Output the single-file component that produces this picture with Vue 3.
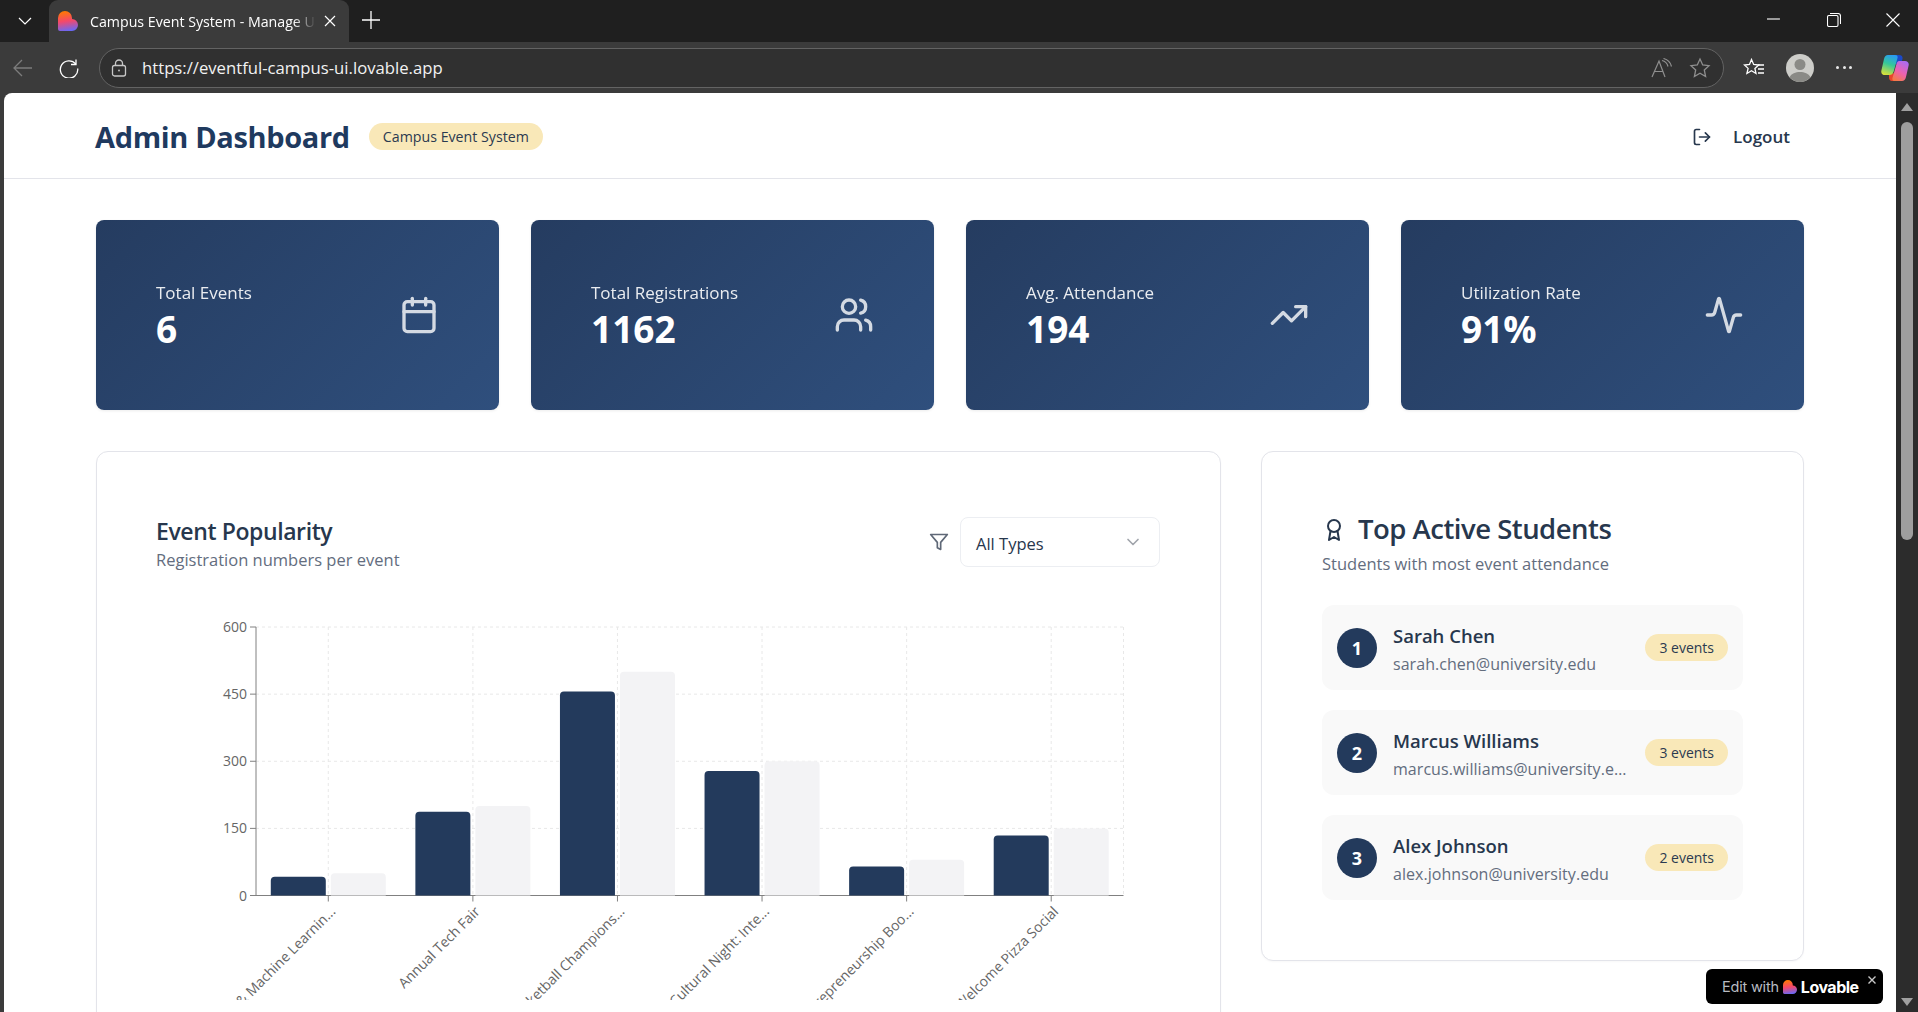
<template>
  <div class="screen">
    <!-- browser tab strip -->
    <div class="tabstrip">
      <div class="tab-menu">
        <svg width="16" height="16" viewBox="0 0 16 16" fill="none" stroke="#fff" stroke-width="1.2"><path d="M2 5l6 6 6-6" /></svg>
      </div>
      <div class="tab">
        <svg class="favicon" width="20" height="20" viewBox="0 0 20 20">
          <defs>
            <linearGradient id="heartA" x1="0.35" y1="0" x2="0.5" y2="1">
              <stop offset="0" stop-color="#ff7a00" />
              <stop offset="0.5" stop-color="#f5486a" />
              <stop offset="1" stop-color="#6a68f5" />
            </linearGradient>
          </defs>
          <path d="M7 0a7 7 0 0 1 7 7v1a6 6 0 0 1 0 12H2a2 2 0 0 1-2-2V7a7 7 0 0 1 7-7z" fill="url(#heartA)" />
        </svg>
        <span class="tab-title">Campus Event System - Manage University Events</span>
        <svg class="tab-close" width="14" height="14" viewBox="0 0 14 14" stroke="#fff" stroke-width="1.2"><path d="M2 2l10 10M12 2L2 12" /></svg>
      </div>
      <svg class="tab-plus" width="18" height="18" viewBox="0 0 18 18" stroke="#fff" stroke-width="1.3"><path d="M9 0v18M0 9h18" /></svg>
      <div class="window-btns">
        <svg width="14" height="14" viewBox="0 0 14 14" stroke="#fff" stroke-width="1.1" fill="none"><path d="M0 6h13" /></svg>
        <svg width="14" height="14" viewBox="0 0 14 14" stroke="#fff" stroke-width="1.1" fill="none"><rect x="0.5" y="2.500" width="10.500" height="11" rx="1.500" /><path d="M3 0.500h8a2.500 2.500 0 0 1 2.500 2.500v8" /></svg>
        <svg width="14" height="14" viewBox="0 0 14 14" stroke="#fff" stroke-width="1.1" fill="none"><path d="M0.500 0.500l13 13M13.500 0.500l-13 13" /></svg>
      </div>
    </div>

    <!-- browser toolbar -->
    <div class="toolbar">
      <svg class="tb-back" width="20" height="20" viewBox="0 0 20 20" fill="none" stroke="#7c7c7c" stroke-width="1.300"><path d="M19 10H1M9 2l-8 8 8 8" /></svg>
      <svg class="tb-reload" width="20" height="20" viewBox="0 0 20 20" fill="none" stroke="#fff" stroke-width="1.300"><path d="M16.800 6A8.700 8.700 0 1 0 18.700 10.500" /><path d="M17 1.500V6.500H12" /></svg>
      <div class="address">
        <svg width="16" height="18" viewBox="0 0 16 18" fill="none" stroke="#c8c8c8" stroke-width="1.300"><rect x="1.500" y="6.500" width="13" height="10.500" rx="2" /><path d="M4.500 6.500V4.500a3.500 3.500 0 0 1 7 0v2" /><circle cx="8" cy="11.500" r="0.900" fill="#c8c8c8" stroke="none" /></svg>
        <span class="url">https://eventful-campus-ui.lovable.app</span>
        <svg class="read" width="22" height="20" viewBox="0 0 22 20" fill="none" stroke="#8f8f8f" stroke-width="1.200"><path d="M1 19L8 3l6 16M3.500 13.500h9" /><path d="M11 2.500a8 8 0 0 1 6 6M12.500 0.500a11 11 0 0 1 8 8" /></svg>
        <svg class="star" width="22" height="22" viewBox="0 0 22 22" fill="none" stroke="#8f8f8f" stroke-width="1.300"><path d="M11 2l2.700 6 6.300.7-4.700 4.300 1.300 6.500L11 16.200 5.400 19.500l1.300-6.500L2 8.700 8.300 8z" /></svg>
      </div>
      <svg class="tb-fav" width="22" height="20" viewBox="0 0 22 20" fill="none" stroke="#fff" stroke-width="1.300"><path d="M8.500 1.500l2.200 5 5 .5-3.800 3.400 1.100 5.100-4.500-2.700-4.600 2.700 1.200-5.100L1.500 7l5-.5z" /><path d="M15 7h6M15 11h6M15 15h6" /></svg>
      <div class="profile">
        <svg width="28" height="28" viewBox="0 0 28 28">
          <circle cx="14" cy="14" r="14" fill="#cdcdc9" />
          <circle cx="14" cy="10.500" r="5.500" fill="#8a8a86" />
          <path d="M3.500 23.200C5.500 19.500 9.500 18 14 18s8.500 1.500 10.500 5.200A14 14 0 0 1 3.500 23.200z" fill="#8a8a86" />
        </svg>
      </div>
      <div class="more"><i></i><i></i><i></i></div>
      <svg class="copilot" width="28" height="26" viewBox="0 0 28 26">
        <defs>
          <linearGradient id="copA" x1="0.6" y1="0" x2="0.3" y2="1">
            <stop offset="0" stop-color="#2a9cf0" />
            <stop offset="0.45" stop-color="#35c79a" />
            <stop offset="1" stop-color="#d8e03a" />
          </linearGradient>
          <linearGradient id="copB" x1="0.75" y1="0" x2="0.25" y2="1">
            <stop offset="0" stop-color="#a96cf2" />
            <stop offset="0.55" stop-color="#ee62b0" />
            <stop offset="1" stop-color="#f47a48" />
          </linearGradient>
        </defs>
        <path d="M13 0h5c2.500 0 4 1.500 3.500 4L20 9h-6z" fill="#1b49c8" />
        <path d="M8 19l6-1-1.500 5c-.5 2 .5 3 2 3H11c-2 0-3-1.500-3-4z" fill="#e8452c" />
        <path d="M7 0h7c2.500 0 3 1.500 2.400 3.500L12.500 17c-.6 2-2 3-4 3H4c-2.500 0-4.300-1.800-3.600-4.500L3 4C3.600 1.500 5 0 7 0z" fill="url(#copA)" />
        <path d="M18 6h6c2.500 0 4.300 1.800 3.600 4.500L25 22c-.6 2.500-2 4-4 4h-7c-2.500 0-3-1.500-2.400-3.500L15.500 9c.6-2 1.500-3 2.500-3z" fill="url(#copB)" />
      </svg>
    </div>

    <!-- page viewport -->
    <div class="viewport">
      <div class="page">
        <header class="topbar">
          <div class="brand">
            <h1>Admin Dashboard</h1>
            <span class="pill">Campus Event System</span>
          </div>
          <button class="logout">
            <svg width="20" height="20" viewBox="0 0 24 24" fill="none" stroke="#27374d" stroke-width="2" stroke-linecap="round" stroke-linejoin="round"><path d="M9 21H5a2 2 0 0 1-2-2V5a2 2 0 0 1 2-2h4" /><path d="M16 17l5-5-5-5" /><path d="M21 12H9" /></svg>
            <span>Logout</span>
          </button>
        </header>

        <main class="content">
          <section class="stats">
            <div v-for="s in stats" :key="s.label" class="stat">
              <div>
                <div class="stat-label">{{ s.label }}</div>
                <div class="stat-value">{{ s.value }}</div>
              </div>
              <svg class="stat-icon" width="40" height="40" viewBox="0 0 24 24" fill="none" stroke="#fff" stroke-width="2" stroke-linecap="round" stroke-linejoin="round">
                <path v-for="d in s.paths" :key="d" :d="d" />
                <rect v-if="s.rect" x="3" y="4" width="18" height="18" rx="2" />
                <circle v-if="s.circle" cx="9" cy="7" r="4" />
              </svg>
            </div>
          </section>

          <section class="columns">
            <div class="card chart-card">
              <div class="chart-head">
                <div class="chart-titles">
                  <h2>Event Popularity</h2>
                  <p class="muted">Registration numbers per event</p>
                </div>
                <div class="filter">
                  <svg width="20" height="20" viewBox="0 0 24 24" fill="none" stroke="#5f6877" stroke-width="2" stroke-linecap="round" stroke-linejoin="round"><path d="M22 3H2l8 9.460V19l4 2v-8.540L22 3z" /></svg>
                  <div class="select">
                    <span>All Types</span>
                    <svg width="20" height="20" viewBox="0 0 24 24" fill="none" stroke="#a0a4ab" stroke-width="2" stroke-linecap="round" stroke-linejoin="round"><path d="M6 9l6 6 6-6" /></svg>
                  </div>
                </div>
              </div>

              <svg class="chart" width="1004" height="400" viewBox="0 0 1004 400">
                <g stroke="#e8e8e8" stroke-dasharray="3 3">
                  <line v-for="t in ticks" :key="'h' + t" :x1="axisLeft" :x2="axisRight" :y1="yOf(t)" :y2="yOf(t)" />
                  <line v-for="b in bars" :key="'v' + b.name" :x1="b.cx" :x2="b.cx" :y1="axisTop" :y2="axisBottom" />
                  <line :x1="axisRight" :x2="axisRight" :y1="axisTop" :y2="axisBottom" />
                </g>
                <g stroke="#808080">
                  <line :x1="axisLeft" :x2="axisLeft" :y1="axisTop" :y2="axisBottom" />
                  <line :x1="axisLeft" :x2="axisRight" :y1="axisBottom" :y2="axisBottom" />
                  <line v-for="t in ticks" :key="'yt' + t" :x1="axisLeft - 6" :x2="axisLeft" :y1="yOf(t)" :y2="yOf(t)" />
                  <line v-for="b in bars" :key="'xt' + b.name" :x1="b.cx" :x2="b.cx" :y1="axisBottom" :y2="axisBottom + 6" />
                </g>
                <g v-for="b in bars" :key="b.name">
                  <path :d="barPath(b.x, b.value)" fill="#233a5c" />
                  <path :d="barPath(b.x + barWidth + barGap, b.capacity)" fill="#f3f3f5" />
                </g>
                <text v-for="t in ticks" :key="'yl' + t" class="tick" :x="axisLeft - 9" :y="yOf(t) + 5" text-anchor="end">{{ t }}</text>
                <text
                  v-for="b in bars"
                  :key="'xl' + b.name"
                  class="tick"
                  :x="b.cx + 8"
                  :y="axisBottom + 17"
                  text-anchor="end"
                  :transform="`rotate(-45 ${b.cx + 8} ${axisBottom + 17})`"
                >{{ b.name }}</text>
              </svg>
            </div>

            <aside class="card students">
              <div class="students-title">
                <svg width="24" height="24" viewBox="0 0 24 24" fill="none" stroke="#27374d" stroke-width="2" stroke-linecap="round" stroke-linejoin="round"><circle cx="12" cy="8" r="6" /><path d="M15.477 12.890L17 22l-5-3-5 3 1.523-9.110" /></svg>
                <h2>Top Active Students</h2>
              </div>
              <p class="muted">Students with most event attendance</p>
              <ul>
                <li v-for="(st, i) in students" :key="st.name">
                  <span class="rank">{{ i + 1 }}</span>
                  <div class="who">
                    <div class="name">{{ st.name }}</div>
                    <div class="email">{{ st.email }}</div>
                  </div>
                  <span class="count">{{ st.events }} events</span>
                </li>
              </ul>
            </aside>
          </section>
        </main>
      </div>

      <div class="scrollbar">
        <span class="arrow up"></span>
        <span class="thumb"></span>
        <span class="arrow down"></span>
      </div>

      <div class="lovable">
        <span class="edit">Edit with</span>
        <svg width="14" height="14" viewBox="0 0 20 20">
          <path d="M7 0a7 7 0 0 1 7 7v1a6 6 0 0 1 0 12H2a2 2 0 0 1-2-2V7a7 7 0 0 1 7-7z" fill="url(#heartA)" />
        </svg>
        <span class="lov">Lovable</span>
        <svg class="lov-x" width="8" height="8" viewBox="0 0 8 8" stroke="#c8c8c8" stroke-width="1.400"><path d="M0.500 0.500l7 7M7.500 0.500l-7 7" /></svg>
      </div>
    </div>
  </div>
</template>

<script setup>
const stats = [
  {
    label: 'Total Events',
    value: '6',
    rect: true,
    paths: ['M16 2v4', 'M8 2v4', 'M3 10h18']
  },
  {
    label: 'Total Registrations',
    value: '1162',
    circle: true,
    paths: ['M16 21v-2a4 4 0 0 0-4-4H6a4 4 0 0 0-4 4v2', 'M16 3.130a4 4 0 0 1 0 7.750', 'M22 21v-2a4 4 0 0 0-3-3.870']
  },
  {
    label: 'Avg. Attendance',
    value: '194',
    paths: ['M22 7l-8.500 8.500-5-5L2 17', 'M16 7h6v6']
  },
  {
    label: 'Utilization Rate',
    value: '91%',
    paths: ['M22 12h-2.480a2 2 0 0 0-1.930 1.460l-2.350 8.360a.25.25 0 0 1-.480 0L9.240 2.180a.25.25 0 0 0-.480 0l-2.350 8.360A2 2 0 0 1 4.490 12H2']
  }
];

const students = [
  { name: 'Sarah Chen', email: 'sarah.chen@university.edu', events: 3 },
  { name: 'Marcus Williams', email: 'marcus.williams@university.edu', events: 3 },
  { name: 'Alex Johnson', email: 'alex.johnson@university.edu', events: 2 }
];

// chart geometry, in svg coordinates
const axisLeft = 100;
const axisRight = 967.5;
const axisTop = 27;
const axisBottom = 295.5;
const barWidth = 55;
const barGap = 5;
const ticks = [0, 150, 300, 450, 600];

const bandWidth = (axisRight - axisLeft) / 6;
const rows = [
  ['AI & Machine Learnin...', 42, 50],
  ['Annual Tech Fair', 187, 200],
  ['Basketball Champions...', 456, 500],
  ['Cultural Night: Inte...', 278, 300],
  ['Entrepreneurship Boo...', 65, 80],
  ['Welcome Pizza Social', 134, 150]
];
const bars = rows.map(([name, value, capacity], i) => ({
  name,
  value,
  capacity,
  cx: axisLeft + bandWidth * (i + 0.5),
  x: axisLeft + bandWidth * i + (bandWidth - barWidth * 2 - barGap) / 2
}));

const yOf = (v) => axisBottom - (v / 600) * (axisBottom - axisTop);

// bar with rounded top corners
const barPath = (x, v) => {
  const top = yOf(v);
  const r = 4;
  return `M${x} ${axisBottom}V${top + r}Q${x} ${top} ${x + r} ${top}H${x + barWidth - r}Q${x + barWidth} ${top} ${x + barWidth} ${top + r}V${axisBottom}Z`;
};
</script>

<style>
html,
body {
  margin: 0;
  overflow: hidden;
  background: #3b3b3b;
}
</style>

<style scoped>
.screen {
  width: 1918px;
  height: 1012px;
  display: flex;
  flex-direction: column;
  overflow: hidden;
  font-family: "Open Sans", "Noto Sans", sans-serif;
  background: #3b3b3b;
  color: #27374d;
}

.tabstrip {
  height: 42px;
  flex: none;
  background: #1f1f1f;
  display: flex;
  align-items: flex-start;
  position: relative;
}

.tab-menu {
  width: 49px;
  height: 42px;
  display: flex;
  align-items: center;
  justify-content: center;
}

.tab {
  width: 300px;
  height: 42px;
  background: #3b3b3b;
  border-radius: 9px 9px 0 0;
  display: flex;
  align-items: center;
  box-sizing: border-box;
  padding: 0 12px 0 9px;
  color: #fff;
}

.tab-title {
  font-size: 14.2px;
  margin-left: 12px;
  flex: 1;
  white-space: nowrap;
  overflow: hidden;
  -webkit-mask-image: linear-gradient(90deg, #000 90%, transparent 100%);
  mask-image: linear-gradient(90deg, #000 90%, transparent 100%);
}

.tab-close {
  margin-left: 7px;
}

.tab-plus {
  margin: 11px 0 0 13px;
}

.window-btns {
  margin-left: auto;
  width: 174px;
  height: 42px;
  display: flex;
  align-items: center;
  justify-content: space-between;
  box-sizing: border-box;
  padding: 0 18px 2px 23px;
}

.toolbar {
  height: 51px;
  flex: none;
  display: flex;
  align-items: center;
  box-sizing: border-box;
  padding: 0 0 0 13px;
}

.tb-reload {
  margin-left: 26px;
}

.address {
  margin-left: 20px;
  width: 1625px;
  height: 40px;
  box-sizing: border-box;
  flex: none;
  border: 1px solid #636363;
  border-radius: 20px;
  background: #303030;
  display: flex;
  align-items: center;
  padding: 0 12px 0 11px;
}

.url {
  margin-left: 15px;
  font-size: 16.7px;
  color: #f2f2f2;
}

.read {
  margin-left: auto;
}

.star {
  margin-left: 16px;
}

.tb-fav {
  margin-left: 19px;
}

.profile {
  margin-left: 21px;
  height: 28px;
}

.more {
  margin-left: 22px;
  width: 16px;
  display: flex;
  justify-content: space-between;
}

.more i {
  width: 3px;
  height: 3px;
  border-radius: 50%;
  background: #e8e8e8;
}

.copilot {
  margin-left: 29px;
}

.viewport {
  flex: 1;
  min-height: 0;
  display: flex;
  position: relative;
  padding-left: 4px;
}

.page {
  width: 1892px;
  flex: none;
  background: #fff;
  border-radius: 8px 0 0 0;
  overflow: hidden;
}

.topbar {
  height: 86px;
  box-sizing: border-box;
  border-bottom: 1px solid #e3e4ea;
  display: flex;
  align-items: center;
  justify-content: space-between;
  padding: 2px 106px 0 91px;
}

.brand {
  display: flex;
  align-items: center;
  gap: 19px;
}

h1 {
  margin: 0;
  font-size: 29px;
  font-weight: 700;
  color: #1f3a5f;
  letter-spacing: -0.35px;
}

.pill {
  height: 27px;
  display: flex;
  align-items: center;
  padding: 0 14px;
  border-radius: 14px;
  background: #f9e8b8;
  font-size: 14.200px;
  font-weight: 500;
  color: #2b3a50;
}

.logout {
  display: flex;
  align-items: center;
  gap: 21px;
  background: none;
  border: none;
  padding: 0;
  font-family: inherit;
  font-size: 17px;
  font-weight: 600;
  color: #27374d;
}

.content {
  padding: 41px 92px 0;
}

.stats {
  display: grid;
  grid-template-columns: repeat(4, 403px);
  gap: 32px;
}

.stat {
  height: 190px;
  box-sizing: border-box;
  border-radius: 8px;
  background: linear-gradient(135deg, #253c60, #2f4f7d);
  display: flex;
  align-items: center;
  justify-content: space-between;
  padding: 0 60px;
  color: #fff;
  box-shadow: 0 1px 3px rgba(0, 0, 0, 0.08);
}

.stat-label {
  font-size: 17px;
  font-weight: 500;
  opacity: 0.9;
  line-height: 24px;
}

.stat-value {
  font-size: 37px;
  font-weight: 700;
  line-height: 40px;
  margin-top: 4px;
}

.stat-icon {
  opacity: 0.8;
}

.columns {
  display: grid;
  grid-template-columns: 1125px 543px;
  gap: 40px;
  margin-top: 41px;
  align-items: start;
}

.card {
  box-sizing: border-box;
  background: #fff;
  border: 1px solid #e3e4ea;
  border-radius: 12px;
  padding: 60px;
  box-shadow: 0 1px 2px rgba(0, 0, 0, 0.03);
}

.chart-card {
  padding-left: 59px;
}

.chart-head {
  height: 60px;
  display: flex;
  align-items: center;
  justify-content: space-between;
}

.chart-titles {
  padding-top: 2px;
}

h2 {
  margin: 0;
  font-weight: 600;
  color: #27374d;
}

.chart-head h2 {
  font-size: 23px;
  line-height: 32px;
  letter-spacing: -0.4px;
}

.chart-head .muted {
  margin-top: 1px;
}

.muted {
  margin: 0;
  font-size: 16.5px;
  line-height: 24px;
  color: #636d7e;
}

.filter {
  display: flex;
  align-items: center;
  gap: 11px;
}

.select {
  width: 200px;
  height: 50px;
  box-sizing: border-box;
  border: 1px solid #eceef2;
  border-radius: 8px;
  display: flex;
  align-items: center;
  justify-content: space-between;
  padding: 2px 16px 0 15px;
  font-size: 16.5px;
  color: #27374d;
}

.select svg {
  margin-top: -2px;
}

.chart {
  display: block;
  margin-top: 28px;
}

.tick {
  font-size: 14px;
  fill: #666;
  font-family: "Open Sans", "Noto Sans", sans-serif;
}

.students-title {
  display: flex;
  align-items: center;
  gap: 12px;
  height: 36px;
}

.students-title svg {
  margin-top: -1px;
}

.students-title h2 {
  font-size: 27.5px;
  line-height: 36px;
  letter-spacing: -0.5px;
  margin-top: -2px;
}

.students .muted {
  margin-top: 4px;
}

.students ul {
  list-style: none;
  margin: 29px 0 0;
  padding: 0;
  display: flex;
  flex-direction: column;
  gap: 20px;
}

.students li {
  height: 85px;
  box-sizing: border-box;
  background: #f9f9f9;
  border-radius: 12px;
  display: flex;
  align-items: center;
  padding: 0 15px;
  gap: 16px;
}

.rank {
  width: 40px;
  height: 40px;
  flex: none;
  border-radius: 50%;
  background: #233a5c;
  color: #fff;
  font-size: 18px;
  font-weight: 700;
  display: flex;
  align-items: center;
  justify-content: center;
}

.who {
  flex: 1;
  min-width: 0;
  padding-top: 2.5px;
}

.name {
  font-size: 18.5px;
  font-weight: 600;
  line-height: 28px;
  color: #27374d;
}

.email {
  font-size: 16px;
  line-height: 24px;
  margin-top: 2.5px;
  color: #636d7e;
  white-space: nowrap;
  overflow: hidden;
  text-overflow: ellipsis;
  letter-spacing: 0.05px;
}

.count {
  flex: none;
  height: 27px;
  padding: 0 14px;
  border-radius: 14px;
  background: #f9e8b8;
  display: flex;
  align-items: center;
  font-size: 14px;
  font-weight: 500;
  color: #2b3a50;
}

.scrollbar {
  width: 22px;
  flex: none;
  background: #2c2c2c;
  display: flex;
  flex-direction: column;
  align-items: center;
  padding-top: 10px;
  box-sizing: border-box;
  position: relative;
}

.arrow {
  width: 0;
  height: 0;
  border-left: 6px solid transparent;
  border-right: 6px solid transparent;
}

.arrow.up {
  border-bottom: 8px solid #a0a0a0;
}

.arrow.down {
  border-top: 8px solid #a0a0a0;
  position: absolute;
  bottom: 6px;
}

.thumb {
  width: 12px;
  height: 418px;
  margin-top: 11px;
  border-radius: 6px;
  background: #9e9e9e;
}

.lovable {
  position: absolute;
  left: 1706px;
  top: 876px;
  width: 177px;
  height: 35px;
  box-sizing: border-box;
  border-radius: 6px;
  background: #000;
  display: flex;
  align-items: center;
  padding-left: 16px;
  gap: 4px;
}

.edit {
  font-size: 14.5px;
  color: #b9bcc2;
  font-family: "Inter", sans-serif;
  letter-spacing: -0.2px;
}

.lov {
  font-size: 16px;
  font-weight: 700;
  color: #fff;
  font-family: "Inter", sans-serif;
  letter-spacing: -0.5px;
}

.lov-x {
  position: absolute;
  right: 7px;
  top: 7px;
}
</style>
